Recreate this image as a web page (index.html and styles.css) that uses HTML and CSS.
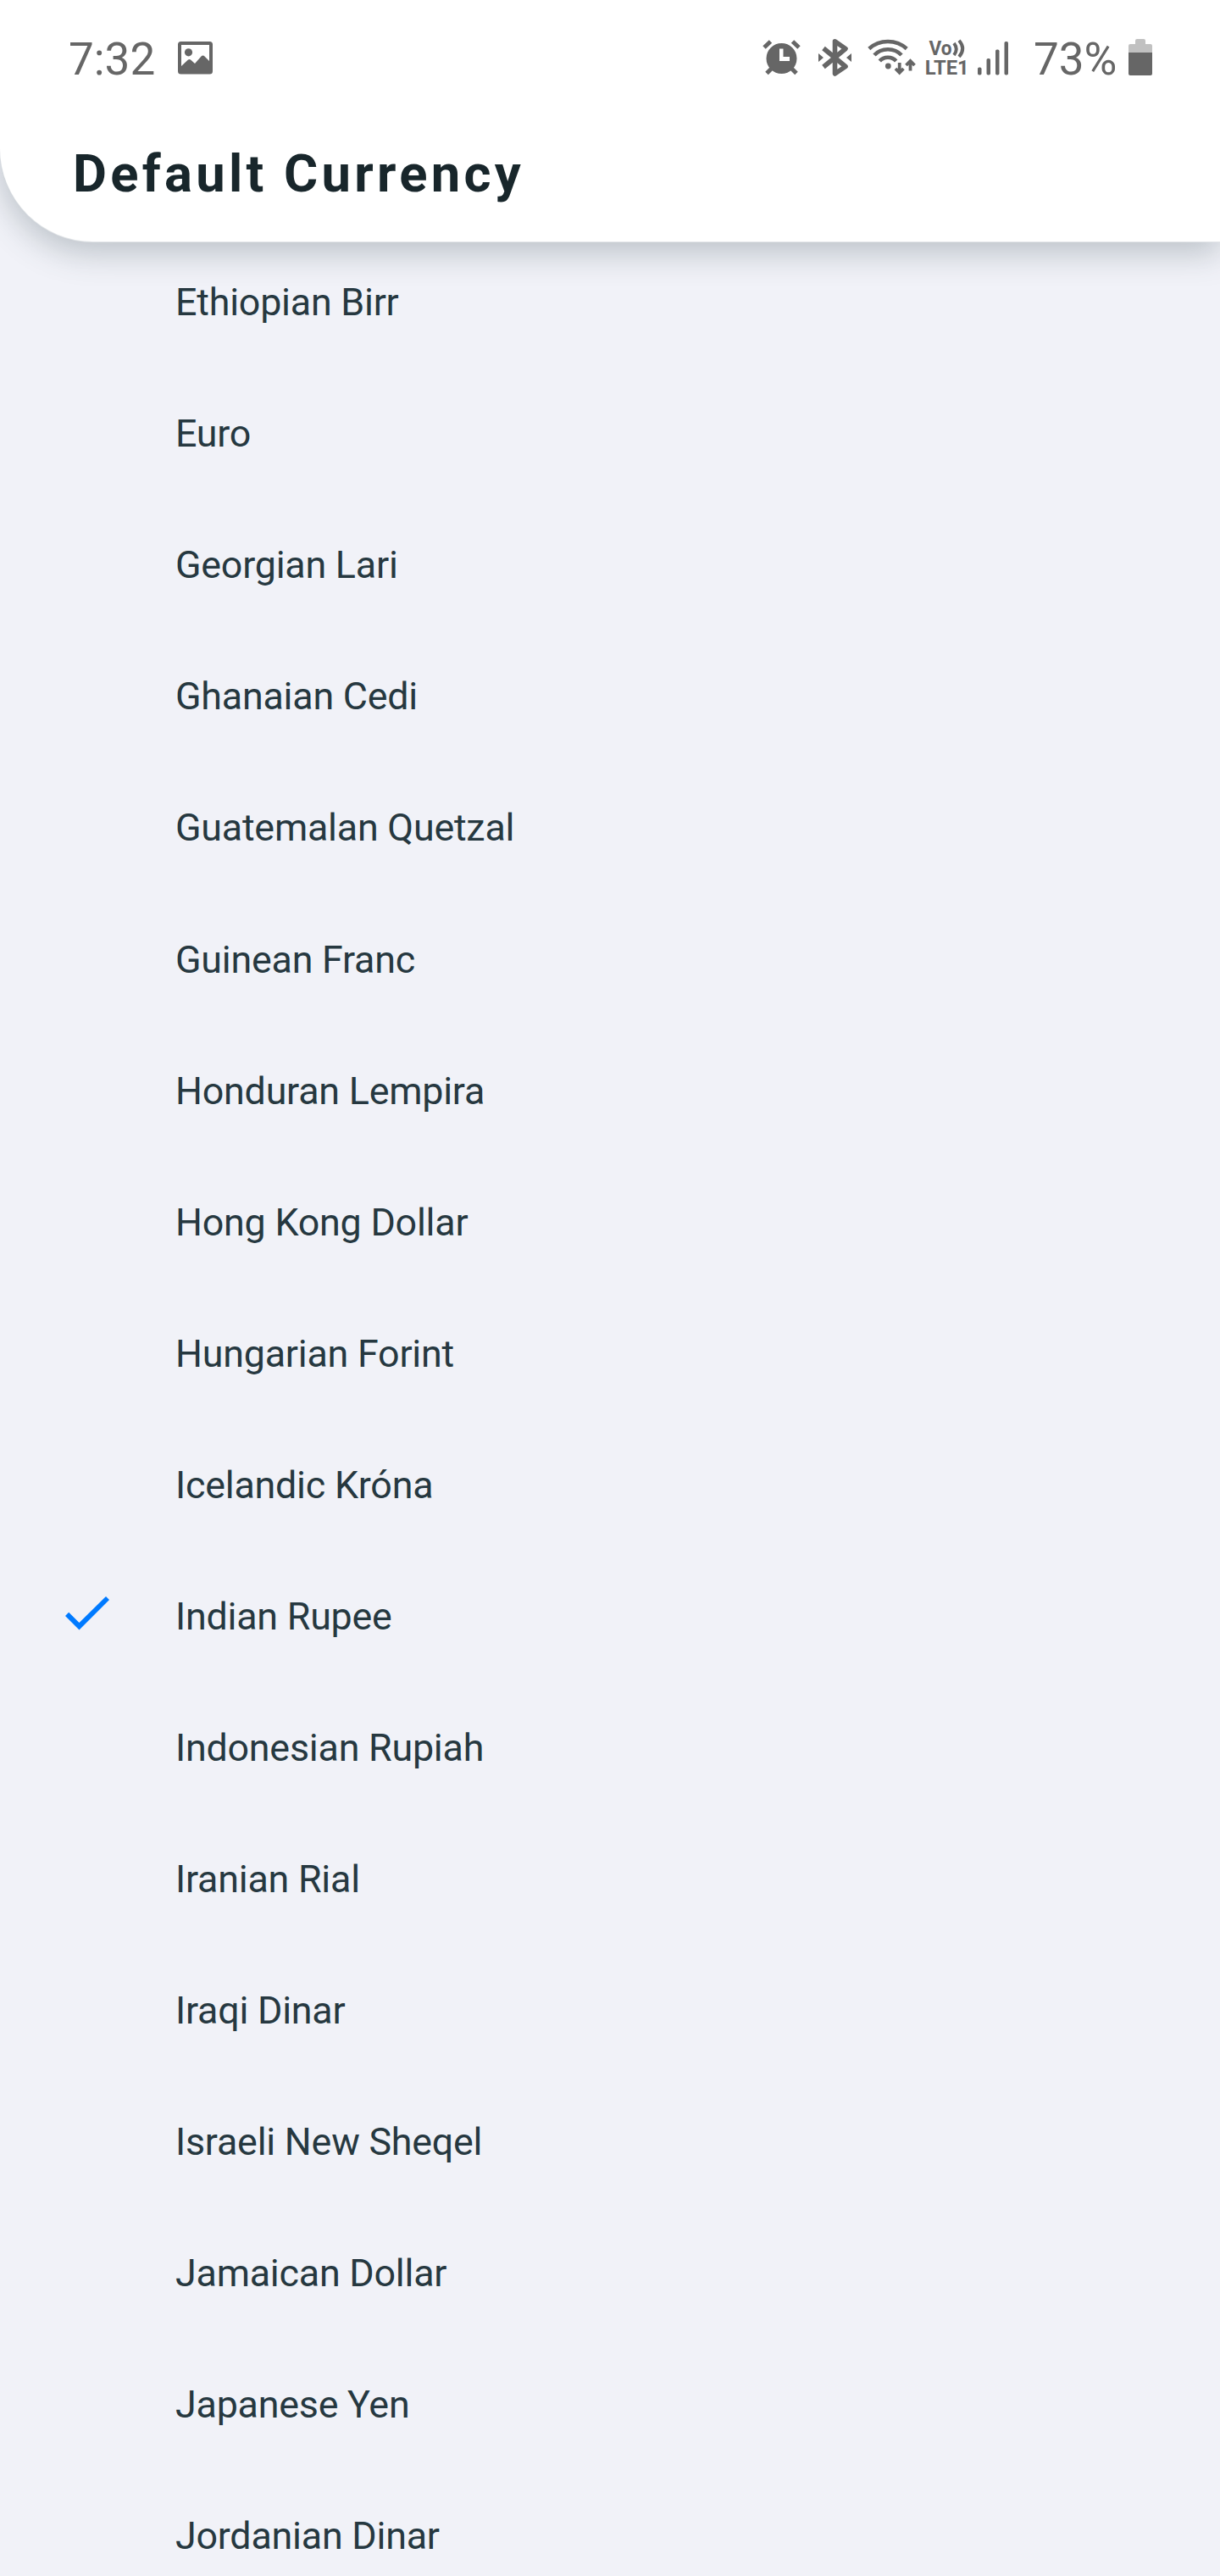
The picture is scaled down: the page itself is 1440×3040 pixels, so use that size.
FILE: index.html
```html
<!DOCTYPE html>
<html lang="en">
<head>
<meta charset="utf-8">
<title>Default Currency</title>
<link rel="stylesheet" href="styles.css">
</head>
<body>
<header class="header">
  <div class="status">
    <span class="time">7:32</span>
    <svg class="icon picture" width="41" height="39" viewBox="0 0 41 39"><path fill-rule="evenodd" d="M3.500 0H37.500Q41 0 41 3.500V35Q41 38.500 37.500 38.500H3.500Q0 38.500 0 35V3.500Q0 0 3.500 0ZM4 4V29L12 21.500Q13.500 20.500 15 21.500L20 26L27.500 17.500Q29.500 15.500 31.500 17.500L37 23V4Z"/><circle cx="12.500" cy="12.800" r="4.600"/></svg>
    <svg class="icon alarm" width="45" height="42" viewBox="0 0 45 42"><path fill-rule="evenodd" d="M22.500 4a18 18 0 1 0 0 36a18 18 0 1 0 0-36ZM20 10.500H24.500V20H32V25H20Z"/><path class="line" stroke-width="5" d="M2 9L9.500 2M35.500 2L43 9M10.500 34L5 39.500M34.500 34L40 39.500"/></svg>
    <svg class="icon bluetooth" width="39" height="44" viewBox="0 0 39 44"><path class="line" stroke-width="5.600" stroke-linejoin="round" d="M6 11L32 32.500L19.500 41V2.800L32 11.500L6 33"/><path d="M0 17L6 22L0 27ZM39 17L33 22L39 27Z"/></svg>
    <svg class="icon wifi" width="57" height="44" viewBox="0 0 57 44"><path class="line" stroke-width="4.500" d="M1.800 11.500Q11 3 24 3T46.200 11.500M8 19Q14 12.200 24 12.200T40 19M14.300 26Q18 21.700 24 21.700T33.700 26"/><circle cx="24.300" cy="32" r="3.400"/><path class="line" stroke-width="3.800" d="M37.700 28V39M33 35L37.700 39.700L42.400 35M50.500 37.500V26M45.500 31L50.500 26L55.500 31"/></svg>
    <svg class="icon volte" width="53" height="44" viewBox="0 0 53 44"><text class="net" x="4.500" y="18.500" font-size="23.500" textLength="27" lengthAdjust="spacingAndGlyphs">Vo</text><path class="line" stroke-width="3.900" d="M34 5Q39.500 12 34 19M40 1.800Q48.500 11.500 40 21"/><text class="net" x="-0.300" y="41.700" font-size="23.500" textLength="52" lengthAdjust="spacingAndGlyphs">LTE1</text></svg>
    <svg class="icon signal" width="36" height="40" viewBox="0 0 36 40"><rect x="0" y="30.500" width="4.500" height="9" rx="1.800"/><rect x="10.500" y="20" width="4.500" height="19.500" rx="1.800"/><rect x="21" y="9.500" width="4.500" height="30" rx="1.800"/><rect x="31.500" y="0" width="4.500" height="39.500" rx="1.800"/></svg>
    <span class="percent">73%</span>
    <svg class="icon battery" width="28" height="43" viewBox="0 0 28 43"><path fill="#c1c1c1" d="M0 16V8Q0 6 2 6H8V2Q8 0 10 0H18Q20 0 20 2V6H26Q28 6 28 8V16Z"/><path d="M0 16H28V41Q28 43 26 43H2Q0 43 0 41Z"/></svg>
  </div>
  <h1 class="title">Default Currency</h1>
</header>
<main class="list">
  <div class="row"><span class="mark"></span>Ethiopian Birr</div>
  <div class="row"><span class="mark"></span>Euro</div>
  <div class="row"><span class="mark"></span>Georgian Lari</div>
  <div class="row"><span class="mark"></span>Ghanaian Cedi</div>
  <div class="row"><span class="mark"></span>Guatemalan Quetzal</div>
  <div class="row"><span class="mark"></span>Guinean Franc</div>
  <div class="row"><span class="mark"></span>Honduran Lempira</div>
  <div class="row"><span class="mark"></span>Hong Kong Dollar</div>
  <div class="row"><span class="mark"></span>Hungarian Forint</div>
  <div class="row"><span class="mark"></span>Icelandic Króna</div>
  <div class="row"><span class="mark"><svg class="check" width="52" height="40" viewBox="0 0 52 40"><path d="M0 23L4.200 18.800L16.500 31L48 0L52 4L16.500 39.500Z"/></svg></span>Indian Rupee</div>
  <div class="row"><span class="mark"></span>Indonesian Rupiah</div>
  <div class="row"><span class="mark"></span>Iranian Rial</div>
  <div class="row"><span class="mark"></span>Iraqi Dinar</div>
  <div class="row"><span class="mark"></span>Israeli New Sheqel</div>
  <div class="row"><span class="mark"></span>Jamaican Dollar</div>
  <div class="row"><span class="mark"></span>Japanese Yen</div>
  <div class="row"><span class="mark"></span>Jordanian Dinar</div>
</main>
</body>
</html>
```
FILE: styles.css
```css
* { box-sizing: border-box; }
body {
  margin: 0;
  height: 3040px;
  overflow: hidden;
  background: #f1f2f8;
  color: #263840;
  font-family: Roboto, sans-serif;
}
.header {
  position: relative;
  height: 285px;
  background: #fff;
  border-bottom-left-radius: 110px;
  box-shadow: 0 1px 0 #e2e5e8, 0 13px 38px rgba(64, 84, 90, 0.31);
}
.status {
  display: flex;
  align-items: flex-start;
  height: 136px;
  padding: 46px 80px 0 81px;
  color: #666;
  font-size: 53px;
  line-height: 62px;
}
.time, .percent { margin-top: -7px; white-space: nowrap; }
.time { width: 129px; }
.percent { width: 112px; margin-left: 30px; }
.icon { flex: none; fill: #666; }
.line { fill: none; stroke: #666; }
.picture { margin-top: 3px; }
.alarm { margin: 1px 0 0 649px; }
.bluetooth { margin-left: 21px; }
.wifi { margin-left: 19px; }
.volte { margin-left: 11px; overflow: visible; }
.signal { margin: 3px 0 0 9px; }
.net { font-weight: 700; }
.title {
  margin: 0;
  padding-left: 86px;
  color: #18262b;
  font-size: 61.500px;
  font-weight: 700;
  line-height: 72px;
  letter-spacing: 4.270px;
  margin-top: 33px;
}
.list { padding-top: 2px; }
.row {
  display: flex;
  align-items: center;
  height: 155px;
  padding-left: 77px;
  font-size: 44.800px;
  letter-spacing: -0.220px;
  line-height: 54px;
  padding-bottom: 16px;
}
.row:nth-child(6) { margin-top: 1px; }
.mark { flex: none; width: 130px; height: 46px; }
.check { display: block; margin-top: -1px; fill: #007aff; }
```
